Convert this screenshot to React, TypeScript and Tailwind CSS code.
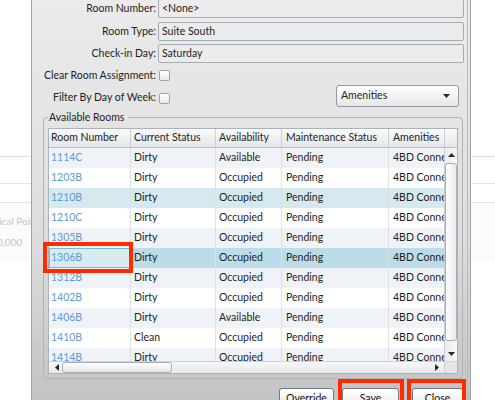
import React from 'react';

type Room = { num: string; status: string; avail: string };

const ROOMS: Room[] = [
  { num: '1114C', status: 'Dirty', avail: 'Available' },
  { num: '1203B', status: 'Dirty', avail: 'Occupied' },
  { num: '1210B', status: 'Dirty', avail: 'Occupied' },
  { num: '1210C', status: 'Dirty', avail: 'Occupied' },
  { num: '1305B', status: 'Dirty', avail: 'Occupied' },
  { num: '1306B', status: 'Dirty', avail: 'Occupied' },
  { num: '1312B', status: 'Dirty', avail: 'Occupied' },
  { num: '1402B', status: 'Dirty', avail: 'Occupied' },
  { num: '1406B', status: 'Dirty', avail: 'Available' },
  { num: '1410B', status: 'Clean', avail: 'Occupied' },
  { num: '1414B', status: 'Dirty', avail: 'Occupied' },
];

const HOVER_ROW = 2;
const SELECTED_ROW = 5;

// column widths include the 1px divider on the right
const COLS = [
  { label: 'Room Number', w: 'w-[82px]', pad: 'pl-[2px]' },
  { label: 'Current Status', w: 'w-[85px]', pad: 'pl-[3px]' },
  { label: 'Availability', w: 'w-[66px]', pad: 'pl-[3px]' },
  { label: 'Maintenance Status', w: 'w-[107px]', pad: 'pl-[4px]' },
  { label: 'Amenities', w: 'w-[55px]', pad: 'pl-[4px]' },
];

const rowBg = (i: number) => {
  if (i === SELECTED_ROW) return 'bg-[#bcdde7]';
  if (i === HOVER_ROW) return 'bg-[#d6e9ef]';
  return i % 2 === 0 ? 'bg-[#eff3f7]' : 'bg-white';
};

function Arrow({ dir }: { dir: 'up' | 'down' | 'left' | 'right' }) {
  const paths = {
    up: 'M0 4 L3.5 0 L7 4 Z',
    down: 'M0 0 L7 0 L3.5 4 Z',
    left: 'M4 0 L4 7 L0 3.5 Z',
    right: 'M0 0 L4 3.5 L0 7 Z',
  };
  const vertical = dir === 'up' || dir === 'down';
  return (
    <svg width={vertical ? 7 : 4} height={vertical ? 4 : 7} viewBox={vertical ? '0 0 7 4' : '0 0 4 7'}>
      <path d={paths[dir]} fill="#2a2a2a" />
    </svg>
  );
}

function CheckBox() {
  return (
    <div className="w-[11px] h-[11px] rounded-[2px] border border-[#98a6b3] bg-gradient-to-b from-white to-[#e6eaee]" />
  );
}

function FieldRow({ label, value, className }: { label: string; value: string; className?: string }) {
  return (
    <div className={`flex items-center ${className ?? ''}`}>
      <div className="w-[124px] text-right">{label}</div>
      <div className="ml-[2px] w-[306px] h-[19px] rounded-[2px] border border-[#a3adb6] bg-[#ececec] flex items-center pl-[3px]">
        {value}
      </div>
    </div>
  );
}

function Button({ label, w, boxed, boxClass }: { label: string; w: string; boxed?: boolean; boxClass?: string }) {
  return (
    <div className="relative">
      <div className={`${w} h-[22px] rounded-[3px] border border-[#707a84] bg-gradient-to-b from-white via-[#f3f3f3] to-[#dadada] flex items-center justify-center text-[#111]`}>
        {label}
      </div>
      {boxed && <div className={`absolute top-[-9px] bottom-[-12px] border-4 border-[#ff2a00] ${boxClass ?? ''}`} />}
    </div>
  );
}

function RoomsGrid() {
  return (
    <div className="relative w-[410px] border border-[#a9b3bc] bg-white">
      {/* header */}
      <div className="flex h-[19px] border-b border-[#b8c1c9] bg-gradient-to-b from-[#fafafa] to-[#e4e7ea]">
        {COLS.map((c, i) => (
          <div
            key={c.label}
            className={`${c.w} ${c.pad} h-full flex items-center whitespace-nowrap overflow-hidden ${i < 4 ? 'border-r border-[#c9d0d6]' : ''}`}
          >
            {c.label}
          </div>
        ))}
        <div className="w-[13px] h-full border-l border-[#c9d0d6]" />
      </div>

      {/* body + vertical scroll */}
      <div className="flex h-[213px]">
        <div className="w-[395px] h-full overflow-hidden">
          {ROOMS.map((r, i) => (
            <div key={r.num} className={`flex h-[20px] ${rowBg(i)}`}>
              <div
                className={`w-[82px] h-full flex items-center pl-[2px] border-r border-[#dde2e6] text-[#5f9bd6] ${
                  i === SELECTED_ROW ? 'bg-[#d7ebf1] outline outline-1 -outline-offset-1 outline-[#7dbace]' : ''
                }`}
              >
                {r.num}
              </div>
              <div className="w-[85px] h-full flex items-center pl-[3px] border-r border-[#dde2e6]">{r.status}</div>
              <div className="w-[66px] h-full flex items-center pl-[3px] border-r border-[#dde2e6] overflow-hidden whitespace-nowrap">{r.avail}</div>
              <div className="w-[107px] h-full flex items-center pl-[4px] border-r border-[#dde2e6]">Pending</div>
              <div className="w-[55px] h-full flex items-center pl-[4px] overflow-hidden whitespace-nowrap">4BD Connecting</div>
            </div>
          ))}
        </div>
        <div className="w-[13px] h-full border-l border-[#c9d0d6] bg-gradient-to-r from-[#e9ebed] to-[#f6f7f8] flex flex-col items-center">
          <div className="h-[14px] flex items-center justify-center">
            <Arrow dir="up" />
          </div>
          <div className="mt-[1px] w-[12px] h-[178px] rounded-[3px] border border-[#a7b0b9] bg-gradient-to-r from-white to-[#e6e9ec]" />
          <div className="mt-auto h-[14px] flex items-center justify-center">
            <Arrow dir="down" />
          </div>
        </div>
      </div>

      {/* horizontal scroll */}
      <div className="flex h-[12px]">
        <div className="w-[395px] h-full flex items-center border-t border-[#cdd3d8] bg-gradient-to-b from-[#f6f7f8] to-[#e6e9eb]">
          <div className="w-[10px] flex justify-end">
            <Arrow dir="left" />
          </div>
          <div className="ml-[3px] w-[110px] h-[11px] rounded-[3px] border border-[#a7b0b9] bg-gradient-to-b from-white to-[#e3e6e9]" />
          <div className="ml-auto mr-[5px]">
            <Arrow dir="right" />
          </div>
        </div>
        <div className="w-[13px] h-full border-l border-t border-[#cdd3d8] bg-[#e3e6e9]" />
      </div>

      {/* red marker around the chosen room */}
      <div className="absolute left-[-6px] top-[113px] w-[90px] h-[31px] border-4 border-[#ff2a00]" />
    </div>
  );
}

export default function App() {
  return (
    <div className="relative w-[495px] h-[400px] overflow-hidden bg-white font-['Lato',sans-serif] text-[10.5px] text-[#1e1e1e]">
      {/* page underneath the dialog */}
      <div className="h-[156px]" />
      <div className="h-[27px] border-t border-[#dedede]" />
      <div className="h-[19px] border-t border-[#e6e6e6]" />
      <div className="h-[60px] border-t border-[#e2e2e2] bg-[#fbfbfb] text-[10px] text-[#c6c6c6] whitespace-nowrap">
        <div className="mt-[11px] ml-[-28px]">Historical Points</div>
        <div className="mt-[6px] ml-[-9px]">10,000</div>
      </div>

      {/* room assignment dialog */}
      <div className="absolute left-[31px] top-0 w-[440px] h-[400px] flex border-l border-r border-[#a2a2a2] pr-[2px] bg-gradient-to-b from-[#ebebeb] via-[#dddddd] via-60% to-[#c3c3c3]">
        <div className="w-[436px] h-full border-r border-[#b9b9b9] overflow-hidden">
          <FieldRow label="Room Number:" value="<None>" className="mt-[-1px]" />
          <FieldRow label="Room Type:" value="Suite South" className="mt-[4px]" />
          <FieldRow label="Check-in Day:" value="Saturday" className="mt-[3px]" />

          <div className="mt-[7px] flex items-center h-[11px]">
            <div className="w-[124px] text-right whitespace-nowrap">Clear Room Assignment:</div>
            <div className="ml-[3px]">
              <CheckBox />
            </div>
          </div>

          <div className="mt-[4px] flex items-center">
            <div className="flex items-center pt-[4px]">
              <div className="w-[124px] text-right whitespace-nowrap">Filter By Day of Week:</div>
              <div className="ml-[3px]">
                <CheckBox />
              </div>
            </div>
            <div className="ml-auto mr-[8px] w-[123px] h-[22px] rounded-[3px] border border-[#8f9aa5] bg-gradient-to-b from-white to-[#e6e6e6] flex items-center pl-[4px] pr-[8px]">
              <span>Amenities</span>
              <span className="ml-auto">
                <Arrow dir="down" />
              </span>
            </div>
          </div>

          <fieldset className="ml-[11px] mt-[3px] w-[420px] rounded-[4px] border border-[#b3b3b3] px-[4px] pt-[4px] pb-[4px]">
            <legend className="pl-[1px] pr-[4px] leading-[14px]">Available Rooms</legend>
            <RoomsGrid />
          </fieldset>

          <div className="mt-[9px] flex justify-end pr-[4px]">
            <Button label="Override" w="w-[55px]" />
            <div className="ml-[8px]">
              <Button label="Save" w="w-[57px]" boxed boxClass="left-[-4px] right-[-5px]" />
            </div>
            <div className="ml-[13px]">
              <Button label="Close" w="w-[51px]" boxed boxClass="left-[-5px] right-[-3px]" />
            </div>
          </div>
        </div>
      </div>
    </div>
  );
}
